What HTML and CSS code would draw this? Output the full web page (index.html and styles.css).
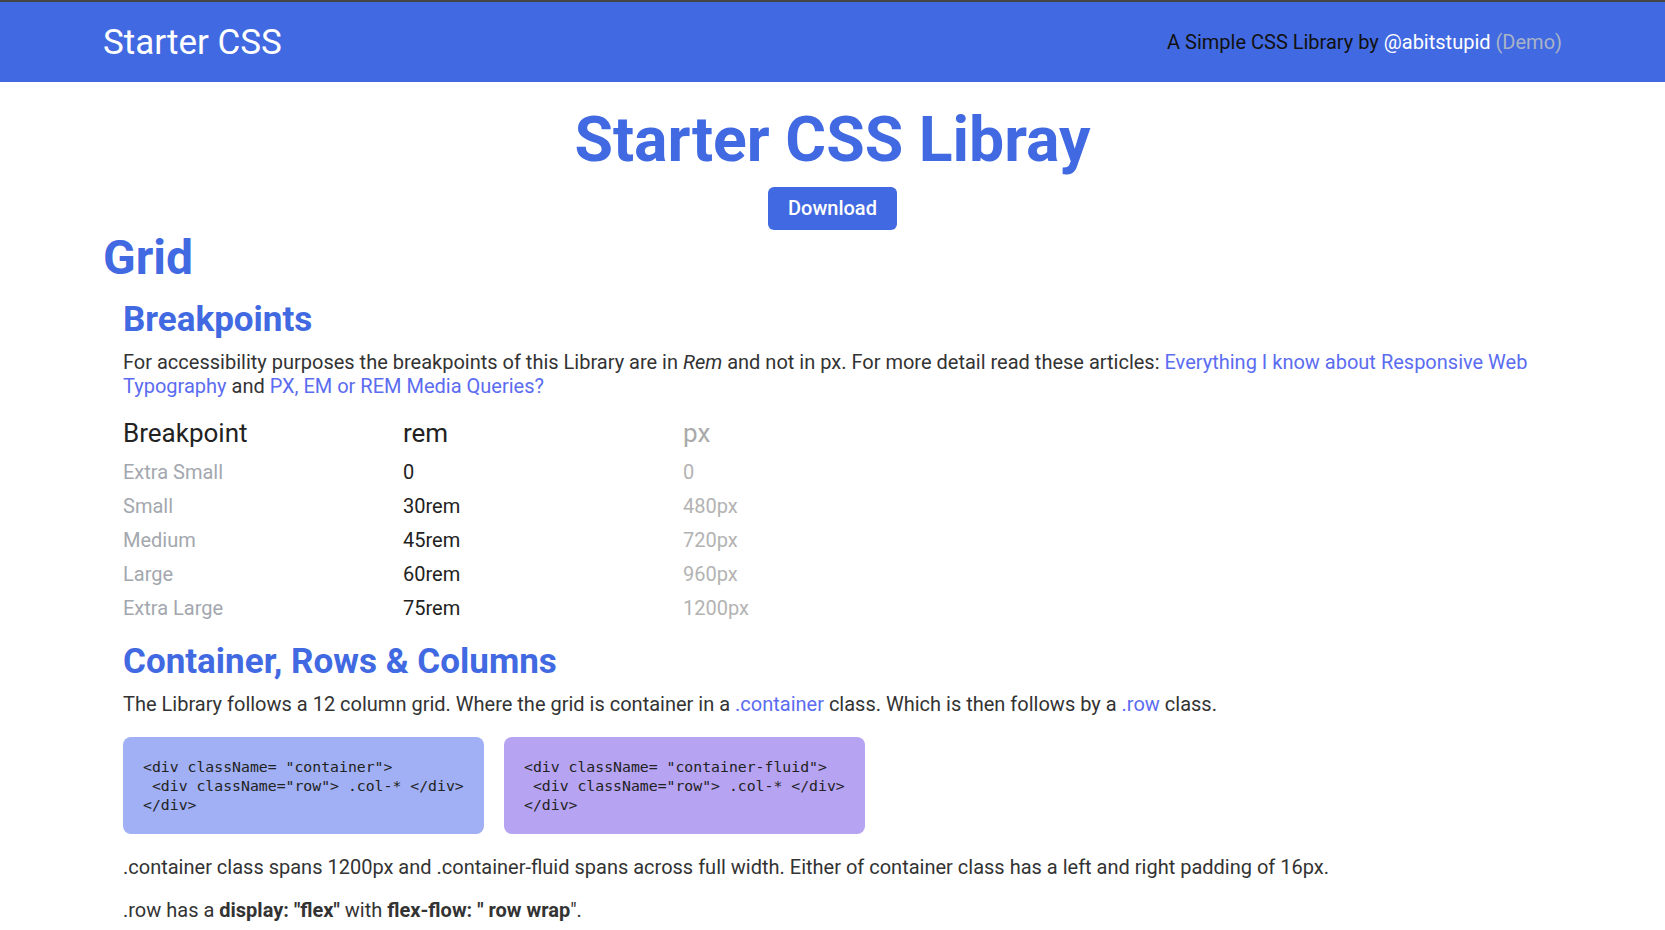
FILE: index.html
```html
<!DOCTYPE html>
<html lang="en">
<head>
<meta charset="utf-8">
<title>Starter CSS</title>
<link rel="stylesheet" href="styles.css">
</head>
<body>
<header class="topbar">
  <div class="brand">Starter CSS</div>
  <div class="tagline">A Simple CSS Library by <a class="author" href="#">@abitstupid</a> <span class="demo">(Demo)</span></div>
</header>
<main class="page">
  <section class="hero">
    <h1 class="hero-title">Starter CSS Libray</h1>
    <button class="btn">Download</button>
  </section>
  <h2 class="section-title">Grid</h2>
  <section class="sub">
    <h3 class="sub-title">Breakpoints</h3>
    <p class="text">For accessibility purposes the breakpoints of this Library are in <em>Rem</em> and not in px. For more detail read these articles: <a href="#">Everything I know about Responsive Web Typography</a> and <a href="#">PX, EM or REM Media Queries?</a></p>
    <div class="bp-table">
      <div class="bp-head">Breakpoint</div><div class="bp-head">rem</div><div class="bp-head muted">px</div>
      <div class="bp-name">Extra Small</div><div class="bp-rem">0</div><div class="bp-px">0</div>
      <div class="bp-name">Small</div><div class="bp-rem">30rem</div><div class="bp-px">480px</div>
      <div class="bp-name">Medium</div><div class="bp-rem">45rem</div><div class="bp-px">720px</div>
      <div class="bp-name">Large</div><div class="bp-rem">60rem</div><div class="bp-px">960px</div>
      <div class="bp-name">Extra Large</div><div class="bp-rem">75rem</div><div class="bp-px">1200px</div>
    </div>
  </section>
  <section class="sub">
    <h3 class="sub-title">Container, Rows &amp; Columns</h3>
    <p class="text">The Library follows a 12 column grid. Where the grid is container in a <a href="#">.container</a> class. Which is then follows by a <a href="#">.row</a> class.</p>
    <div class="code-row">
      <pre class="code code-blue">&lt;div className= "container"&gt;
 &lt;div className="row"&gt; .col-* &lt;/div&gt;
&lt;/div&gt;</pre>
      <pre class="code code-purple">&lt;div className= "container-fluid"&gt;
 &lt;div className="row"&gt; .col-* &lt;/div&gt;
&lt;/div&gt;</pre>
    </div>
    <p class="text">.container class spans 1200px and .container-fluid spans across full width. Either of container class has a left and right padding of 16px.</p>
    <p class="text">.row has a <strong>display: "flex"</strong> with <strong>flex-flow: " row wrap</strong>".</p>
  </section>
</main>
</body>
</html>
```
FILE: styles.css
```css
* { box-sizing: border-box; }
html, body { margin: 0; padding: 0; }
body {
  font-family: Roboto, "Liberation Sans", sans-serif;
  color: #333;
  background: #fff;
}
a { color: #5b6cf0; text-decoration: none; }

.topbar {
  display: flex;
  align-items: center;
  justify-content: space-between;
  height: 82px;
  padding: 0 103px;
  background: #4169e1;
  border-top: 2px solid #444;
}
.brand {
  color: #fff;
  font-size: 35px;
}
.tagline {
  font-size: 20px;
  color: #111;
}
.tagline .author { color: #fff; }
.tagline .demo { color: #a9b3c7; }

.page { padding: 0 103px; }

.hero {
  display: flex;
  flex-direction: column;
  align-items: center;
  padding-top: 20px;
}
.hero-title {
  margin: 0;
  font-size: 62.5px;
  font-weight: 700;
  color: #4169e1;
  line-height: 75px;
}
.btn {
  margin-top: 10px;
  font-family: inherit;
  font-size: 20px;
  font-weight: 500;
  color: #fff;
  background: #4169e1;
  border: none;
  border-radius: 6px;
  padding: 10px 20px;
  line-height: 23px;
}

.section-title {
  margin: 0;
  font-size: 48px;
  font-weight: 700;
  color: #4169e1;
  line-height: 56px;
}
.sub { padding: 0 20px; }
.sub-title {
  margin: 13px 0 0;
  font-size: 35px;
  font-weight: 700;
  color: #4169e1;
  line-height: 41px;
}
.text {
  margin: 11px 0 0;
  font-size: 20px;
  line-height: 23.5px;
}

.bp-table {
  display: grid;
  grid-template-columns: 280px 280px 280px;
  margin-top: 18px;
  font-size: 20px;
}
.bp-head {
  font-size: 26px;
  color: #222;
  line-height: 34px;
  padding-bottom: 5px;
}
.bp-head.muted { color: #aaa; }
.bp-name, .bp-rem, .bp-px { line-height: 34px; }
.bp-name { color: #a3a7ae; }
.bp-rem { color: #222; }
.bp-px { color: #b3b3b3; }

.sub + .sub { margin-top: 16px; }

.code-row {
  display: flex;
  gap: 20px;
  margin-top: 20px;
}
.code {
  margin: 0;
  width: 361px;
  padding: 20px;
  border-radius: 8px;
  font-family: "DejaVu Sans Mono", "Liberation Mono", monospace;
  font-size: 14.8px;
  line-height: 19px;
  color: #222;
}
.code-blue { background: #a1b0f4; }
.code-purple { background: #b6a4f3; }
.code-row + .text { margin-top: 22px; }
.text + .text { margin-top: 20px; }
```
